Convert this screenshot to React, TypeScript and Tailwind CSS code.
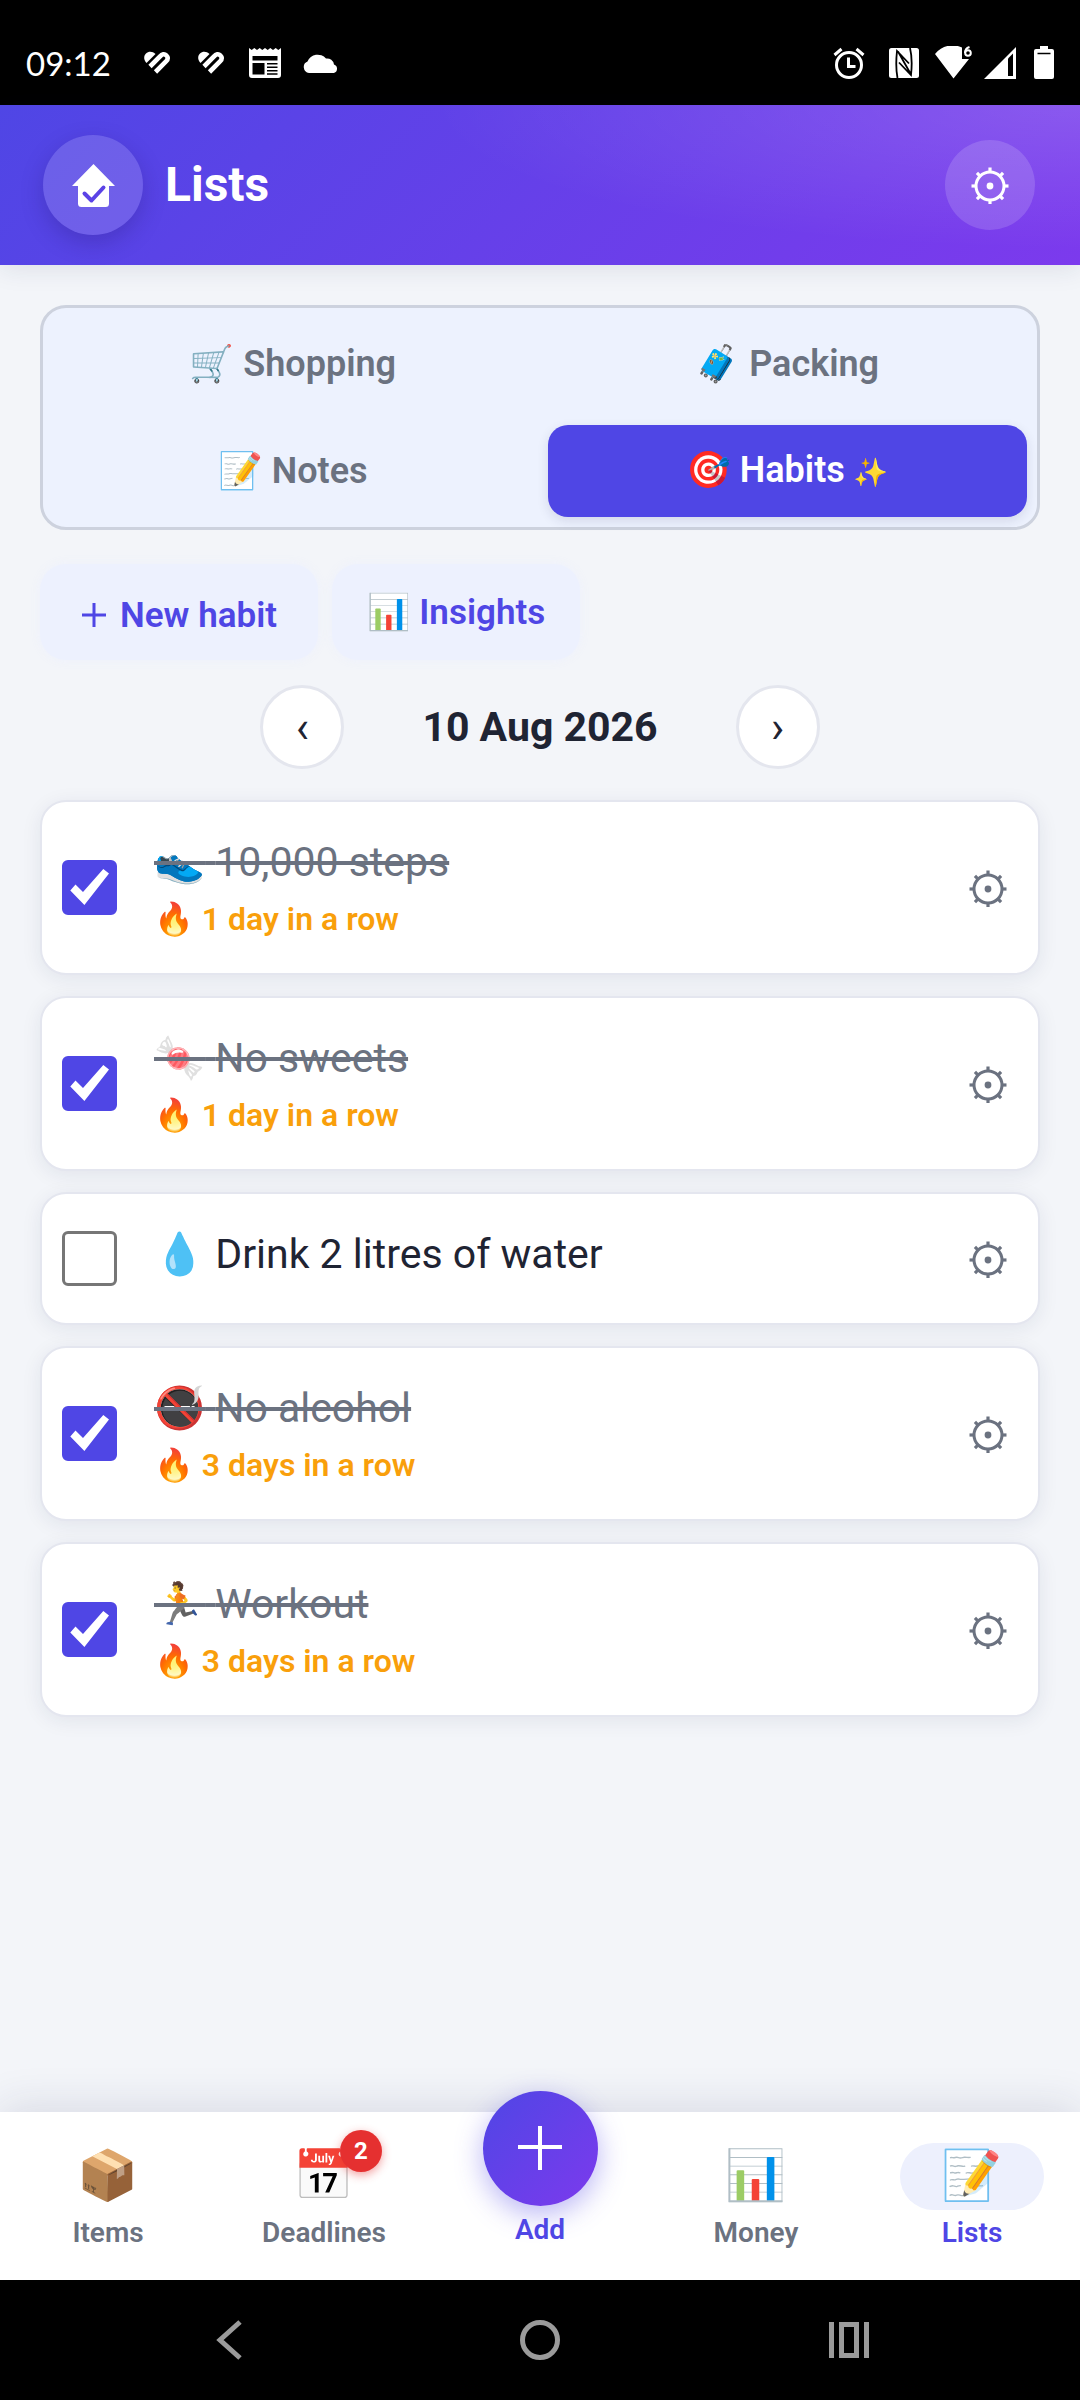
import React, { useState } from "react";

type Habit = {
    id: string;
    icon: string;
    name: string;
    streak: number;
    done: boolean;
};

const initialHabits: Habit[] = [
    { id: "steps", icon: "👟", name: "10,000 steps", streak: 1, done: true },
    { id: "sweets", icon: "🍬", name: "No sweets", streak: 1, done: true },
    { id: "water", icon: "💧", name: "Drink 2 litres of water", streak: 0, done: false },
    { id: "alcohol", icon: "🚭", name: "No alcohol", streak: 3, done: true },
    { id: "workout", icon: "🏃", name: "Workout", streak: 3, done: true },
];

const GearIcon: React.FC = () => (
    <svg className="size-[38px]" viewBox="0 0 38 38" fill="none" stroke="currentColor" aria-hidden="true">
        <circle cx="19" cy="20" r="14" strokeWidth="3" />
        <circle cx="19" cy="20" r="3.4" fill="currentColor" stroke="none" />
        {[0, 45, 90, 135, 180, 225, 270, 315].map((angle) => (
            <path key={angle} d="M19 6V1.500" strokeWidth="3.2" transform={`rotate(${angle} 19 20)`} />
        ))}
    </svg>
);

const HeartIcon: React.FC = () => (
    <svg className="h-[23px] w-8" viewBox="-3 0 32 23" fill="none" stroke="#fff" aria-hidden="true">
        <path d="M2.500 12C-0.500 9 -0.500 5 2 2.500C4.500 0 8.500 0 11.500 3Z" fill="#fff" stroke="none" />
        <path d="M6 15.500L16 5.500C18 3 20.500 2.600 22.300 4.300C24.300 6.200 23.900 8.500 22 10.500L11.500 21" strokeWidth="4.600" />
    </svg>
);

const StatusBar: React.FC = () => (
    <div className="flex h-[105px] items-center justify-between bg-black px-[26px] pt-5 text-white">
        <div className="flex items-center">
            <span className="mr-[30px] font-['Lato','Roboto',sans-serif] text-[33px] leading-10">09:12</span>
            <div className="flex items-center gap-[22px]">
                <HeartIcon />
                <HeartIcon />
                <svg className="h-[30px] w-[32px]" viewBox="0 0 32 30" aria-hidden="true">
                    <path d="M0 0L2.700 2L5.300 0L8 2L10.700 0L13.300 2L16 0L18.700 2L21.300 0L24 2L26.700 0L29.300 2L32 0V27Q32 30 29 30H3Q0 30 0 27Z" fill="#fff" />
                    <path d="M3.500 8H28.500V12.500H3.500ZM3.500 15H15.500V26.500H3.500ZM18 15H28.500V16.500H18ZM18 18.500H28.500V20H18ZM18 22H28.500V23.500H18ZM18 25.300H28.500V26.800H18Z" fill="#000" />
                </svg>
                <svg className="h-[21px] w-[36px]" viewBox="0 0 36 21" fill="#fff" aria-hidden="true">
                    <path d="M6 21A6 6 0 0 1 4.500 9.500A11 11 0 0 1 23 6.500A7 7 0 0 1 31 12.500A4.500 4.500 0 0 1 31 21Z" />
                </svg>
            </div>
        </div>
        <div className="flex items-center">
            <svg className="mr-6 size-8" viewBox="0 0 32 32" fill="none" stroke="#fff" strokeWidth="3" aria-hidden="true">
                <circle cx="16" cy="18" r="12.500" />
                <path d="M1.500 8L8.500 2M30.500 8L23.500 2M15.500 10.500V19.500H22.500" />
            </svg>
            <svg className="mr-4 size-[30px]" viewBox="0 0 30 30" aria-hidden="true">
                <rect width="30" height="30" rx="2.500" fill="#fff" />
                <path d="M8.500 30C7 22 7 12 8 3L20 15.500M21 0C23 8 23 18 22 27L10 14.500M9 3.500L22 26.500" fill="none" stroke="#000" strokeWidth="1.800" />
            </svg>
            <svg className="mr-3 h-[33px] w-[37px]" viewBox="0 0 37 33" aria-hidden="true">
                <path d="M0 8C8-2 20-2 27 1.500V13H34L18.500 32.500Z" fill="#fff" />
                <path d="M34.500 1C31.500 2 30 4.500 30 7" fill="none" stroke="#fff" strokeWidth="2" />
                <circle cx="33" cy="7" r="2.800" fill="none" stroke="#fff" strokeWidth="2" />
            </svg>
            <svg className="mr-[18px] size-8" viewBox="0 0 32 32" aria-hidden="true">
                <path d="M32 0V32H0Z" fill="#fff" />
                <path d="M24 11.500L29 6.500V29H24Z" fill="#000" />
            </svg>
            <svg className="h-[33px] w-5" viewBox="0 0 20 33" aria-hidden="true">
                <path d="M6 0H14V3H18Q20 3 20 5V31Q20 33 18 33H2Q0 33 0 31V5Q0 3 2 3H6Z" fill="#fff" />
                <path d="M3.500 7.500H16.500" stroke="#000" strokeWidth="1.500" />
            </svg>
        </div>
    </div>
);

const Header: React.FC = () => (
    <header className="z-10 flex items-center justify-between bg-[radial-gradient(ellipse_60%_90%_at_100%_0%,rgba(255,255,255,0.15),transparent),linear-gradient(135deg,#4f46e5,#7c3aed)] py-[30px] pr-[45px] pl-[43px] text-white shadow-[0_4px_24px_rgba(30,35,80,0.10)]">
        <div className="flex items-center gap-[22px]">
            <div className="flex size-[100px] items-center justify-center rounded-full bg-white/15 shadow-[0_8px_22px_rgba(30,20,100,0.25)]">
                <svg className="size-[43px]" viewBox="0 0 43 43" aria-hidden="true">
                    <path d="M21.500 0L43 22H37V39.500Q37 43 33.500 43H9.500Q6 43 6 39.500V22H0Z" fill="#fff" />
                    <path d="M12.500 29.500L19.500 36.500L31.500 23.500" fill="none" stroke="#5b43e6" strokeWidth="4" strokeLinecap="round" strokeLinejoin="round" />
                </svg>
            </div>
            <h1 className="text-[48px] leading-[60px] font-bold">Lists</h1>
        </div>
        <button type="button" aria-label="Settings" className="flex size-[90px] items-center justify-center rounded-full bg-white/15">
            <GearIcon />
        </button>
    </header>
);

const Tabs: React.FC = () => {
    const tabClass = "h-[92px] rounded-[20px] text-[36px] leading-[42px] font-semibold";

    return (
        <nav className="grid grid-cols-2 gap-[15px] rounded-[26px] border-[3px] border-[#cdd2de] bg-[#edf2fe] p-[10px]">
            <button type="button" className={`${tabClass} text-[#6b7280]`}>🛒 Shopping</button>
            <button type="button" className={`${tabClass} text-[#6b7280]`}>🧳 Packing</button>
            <button type="button" className={`${tabClass} text-[#6b7280]`}>📝 Notes</button>
            <button type="button" className={`${tabClass} bg-[#4f46e5] text-white shadow-[0_4px_12px_rgba(30,35,80,0.12)]`}>
                🎯 Habits <span className="text-[28px]">✨</span>
            </button>
        </nav>
    );
};

const HabitCard: React.FC<{ habit: Habit; onToggle: () => void }> = ({ habit, onToggle }) => (
    <li className="flex items-center rounded-[26px] border-2 border-[#e4e6ef] bg-white py-[30px] pr-[31px] pl-5 shadow-[0_4px_20px_rgba(30,35,80,0.08)]">
        <span className="relative size-[55px] shrink-0">
            <input
                id={habit.id}
                type="checkbox"
                checked={habit.done}
                onChange={onToggle}
                className="block size-full appearance-none rounded-[6px] border-[3px] border-[#767676] bg-white checked:border-[#4f46e5] checked:bg-[#4f46e5]"
            />
            {habit.done && (
                <svg className="pointer-events-none absolute inset-0 size-full" viewBox="0 0 55 55" fill="#fff" aria-hidden="true">
                    <path d="M8.300 30.500L13.500 24.500L21 32L41.300 9L47 13.500L22.400 45Z" />
                </svg>
            )}
        </span>
        <div className="ml-[37px] flex min-h-[69px] min-w-0 flex-1 flex-col gap-1">
            <label
                htmlFor={habit.id}
                className={`text-[41px] leading-[60px] ${habit.done ? "text-[#6b7280] line-through" : "text-[#1f2433]"}`}
            >
                {habit.icon} {habit.name}
            </label>
            {habit.streak > 0 && (
                <p className="text-[32px] leading-[47px] font-semibold text-[#f99f0b]">
                    🔥 {habit.streak} {habit.streak === 1 ? "day" : "days"} in a row
                </p>
            )}
        </div>
        <button type="button" aria-label={`Edit ${habit.name}`} className="text-[#6b7280]">
            <GearIcon />
        </button>
    </li>
);

const NavItem: React.FC<{ icon: string; label: string; active?: boolean; badge?: number }> = ({ icon, label, active, badge }) => (
    <a href="#" className={`flex flex-1 flex-col items-center pt-[31px] ${active ? "text-[#4f46e5]" : "text-[#6b7280]"}`}>
        <span className={`relative flex h-[67px] w-36 items-center justify-center rounded-full pb-[2px] text-[49px] leading-[46px] ${active ? "bg-[#edf0fd]" : ""}`}>
            {icon}
            {badge && (
                <span className="absolute -top-[13px] right-[14px] flex size-[42px] items-center justify-center rounded-full bg-[#e53030] text-[24px] font-bold text-white shadow-[0_3px_10px_rgba(229,46,46,0.45)]">
                    {badge}
                </span>
            )}
        </span>
        <span className="mt-[5px] text-[28px] leading-9 font-semibold">{label}</span>
    </a>
);

const BottomNav: React.FC = () => (
    <nav className="flex h-[168px] bg-white shadow-[0_-6px_40px_rgba(30,35,80,0.12)]">
        <NavItem icon="📦" label="Items" />
        <NavItem icon="📅" label="Deadlines" badge={2} />
        <a href="#" className="-mt-[21px] flex flex-1 flex-col items-center text-[#4f46e5]">
            <span className="flex size-[115px] items-center justify-center rounded-full bg-[linear-gradient(135deg,#4f46e5,#7c3aed)] shadow-[0_8px_28px_rgba(79,70,229,0.4)]">
                <svg className="size-[46px]" viewBox="0 0 46 46" stroke="#fff" strokeWidth="4" aria-hidden="true">
                    <path d="M23 0V44M1 21H45" />
                </svg>
            </span>
            <span className="mt-[6px] text-[28px] leading-9 font-semibold">Add</span>
        </a>
        <NavItem icon="📊" label="Money" />
        <NavItem icon="📝" label="Lists" active />
    </nav>
);

const SystemNav: React.FC = () => (
    <div className="flex h-[120px] items-center justify-around bg-black px-[76px] text-[#9b9b9b]">
        <button type="button" aria-label="Back">
            <svg className="size-10" viewBox="0 0 40 40" fill="none" stroke="currentColor" strokeWidth="5" aria-hidden="true">
                <path d="M29 2L9 20L29 38" />
            </svg>
        </button>
        <button type="button" aria-label="Home">
            <svg className="size-10" viewBox="0 0 40 40" fill="none" stroke="currentColor" strokeWidth="5" aria-hidden="true">
                <circle cx="20" cy="20" r="17.500" />
            </svg>
        </button>
        <button type="button" aria-label="Recent apps">
            <svg className="size-10" viewBox="0 0 40 40" fill="none" stroke="currentColor" strokeWidth="5" aria-hidden="true">
                <path d="M2.500 2V38M37.500 2V38M12.500 4.500H27.500V35.500H12.500Z" />
            </svg>
        </button>
    </div>
);

const App: React.FC = () => {
    const [habits, setHabits] = useState(initialHabits);

    const toggle = (id: string) =>
        setHabits(habits.map((h) => (h.id === id ? { ...h, done: !h.done } : h)));

    const actionClass = "flex h-24 items-center rounded-[26px] bg-[#edf1fe] text-[35px] leading-10 font-semibold text-[#4f46e5] shadow-[0_0_10px_rgba(237,241,254,0.9)]";
    const arrowClass = "flex size-[84px] items-center justify-center rounded-full border-[3px] border-[#e4e6ee] bg-white text-[44px] leading-none text-[#1f2433]";

    return (
        <div className="flex min-h-screen flex-col bg-[#f3f5f9] font-['Roboto','Noto_Color_Emoji',sans-serif]">
            <StatusBar />
            <Header />
            <main className="flex-1 px-10 pt-10">
                <Tabs />
                <div className="mt-[34px] flex gap-[14px]">
                    <button type="button" className={`${actionClass} gap-[13px] px-[41px] pt-2`}>
                        <svg className="size-[26px]" viewBox="0 0 26 26" stroke="currentColor" strokeWidth="3" aria-hidden="true">
                            <path d="M13 0V24M1 12H25" />
                        </svg>
                        New habit
                    </button>
                    <button type="button" className={`${actionClass} px-[35px] pt-[2px]`}>📊 Insights</button>
                </div>
                <div className="mt-[25px] flex items-center justify-center gap-[78px]">
                    <button type="button" aria-label="Previous day" className={arrowClass}>‹</button>
                    <h2 className="text-[41px] leading-[48px] font-bold text-[#1f2433]">10 Aug 2026</h2>
                    <button type="button" aria-label="Next day" className={arrowClass}>›</button>
                </div>
                <ul className="mt-[31px] flex flex-col gap-[21px]">
                    {habits.map((habit) => (
                        <HabitCard key={habit.id} habit={habit} onToggle={() => toggle(habit.id)} />
                    ))}
                </ul>
            </main>
            <BottomNav />
            <SystemNav />
        </div>
    );
};

export default App;
